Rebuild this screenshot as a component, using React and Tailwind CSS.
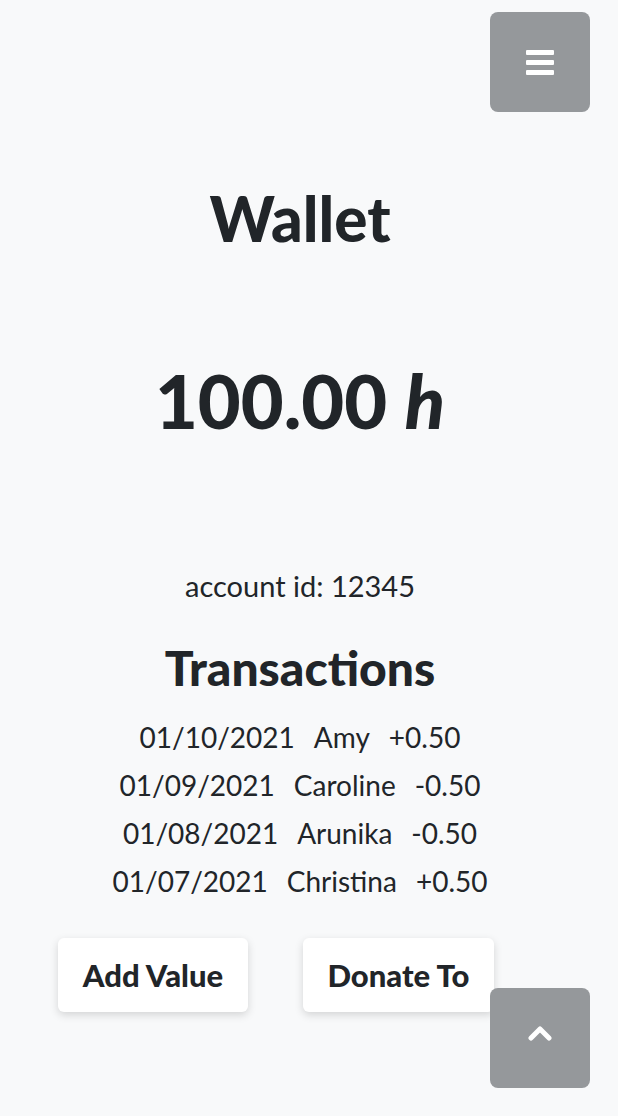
import React from "react";

const rows = [
  ["01/10/2021", "Amy", "+0.50"],
  ["01/09/2021", "Caroline", "-0.50"],
  ["01/08/2021", "Arunika", "-0.50"],
  ["01/07/2021", "Christina", "+0.50"],
];

export default function App() {
  return (
    <div
      className="relative min-h-screen w-full bg-[#f8f9fa] text-[#212529]"
      style={{ fontFamily: "Lato, 'Noto Sans', sans-serif" }}
    >
      <button className="fixed top-[12px] right-[28px] flex h-[100px] w-[100px] flex-col items-center justify-center gap-[5px] rounded-lg bg-[#95989b]">
        <span className="block h-[5px] w-[28px] rounded-[1px] bg-white" />
        <span className="block h-[5px] w-[28px] rounded-[1px] bg-white" />
        <span className="block h-[5px] w-[28px] rounded-[1px] bg-white" />
      </button>

      <main className="flex w-[600px] flex-col items-center">
        <h1 className="mt-[182px] h-[72px] text-[62px] font-black leading-[72px]">Wallet</h1>
        <div className="mt-[107px] h-[80px] text-[74px] font-black leading-[80px]">
          100.00 <span className="italic">h</span>
        </div>
        <div className="mt-[125px] h-[40px] text-[29px] leading-[40px]">account id: 12345</div>
        <h2 className="mt-[34px] h-[56px] text-[48px] font-black leading-[56px]">Transactions</h2>
        <div className="mt-[17px] flex flex-col items-center">
          {rows.map((r, i) => (
            <div key={i} className="flex h-[48px] items-center gap-[19px] text-[28px] leading-[48px]">
              <span>{r[0]}</span>
              <span>{r[1]}</span>
              <span>{r[2]}</span>
            </div>
          ))}
        </div>
        <div className="mt-[33px] flex w-full gap-[55px] pl-[58px]">
          <button className="h-[74px] w-[190px] rounded-md bg-white text-[31px] font-black shadow-[0_3px_8px_rgba(0,0,0,0.15)]">
            Add Value
          </button>
          <button className="h-[74px] w-[191px] rounded-md bg-white text-[31px] font-black shadow-[0_3px_8px_rgba(0,0,0,0.15)]">
            Donate To
          </button>
        </div>
      </main>

      <button className="fixed bottom-[28px] right-[28px] flex h-[100px] w-[100px] items-center justify-center rounded-lg bg-[#95989b]">
        <svg width="24" height="16" viewBox="0 0 24 16" className="-mt-[10px]">
          <path d="M3 13 L12 4 L21 13" fill="none" stroke="white" strokeWidth="5" strokeLinecap="round" strokeLinejoin="round" />
        </svg>
      </button>
    </div>
  );
}
